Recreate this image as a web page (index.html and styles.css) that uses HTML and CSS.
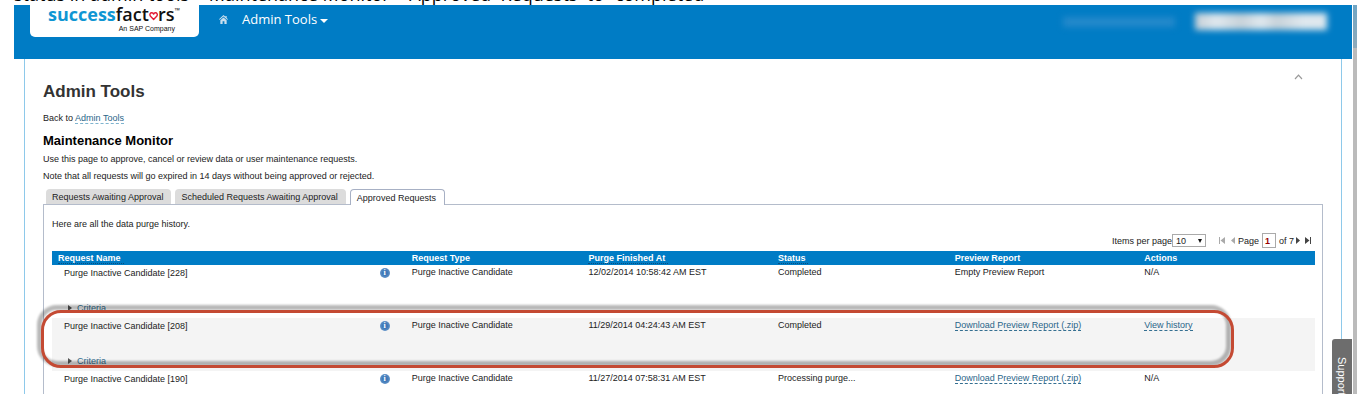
FILE: index.html
```html
<!DOCTYPE html>
<html lang="en">
<head>
<meta charset="utf-8">
<title>Admin Tools - Maintenance Monitor</title>
<link rel="stylesheet" href="styles.css">
</head>
<body>
<p class="caption"><span>status in admin tools &gt; Maintenance Monitor &gt; Approved&nbsp; Requests&nbsp; to “completed”</span></p>
<div class="window">
  <div class="page">
    <header class="topbar">
      <a class="logo" href="#">
        <span class="logo-name"><b>success</b>fact<svg class="heart" viewBox="0 0 12 12" aria-label="o"><path d="M6 10.600 2 6.400C.2 4 1.800 1.500 3.800 1.700 5 1.800 5.700 2.800 6 3.600 6.300 2.800 7 1.800 8.200 1.700c2-.2 3.600 2.300 1.800 4.700z" fill="#fff" stroke="#e31b35" stroke-width="1.800" stroke-linejoin="round"/></svg>rs<sup>™</sup></span>
        <span class="logo-sub">An SAP Company</span>
      </a>
      <nav class="menu">
        <a class="home" href="#" aria-label="Home"><svg viewBox="0 0 10 10"><path d="M5 0 0 4.600l.8.8L5 1.700l4.200 3.700.8-.8-1.500-1.400V1H7.200v1zM1.500 5.700V10H4V7h2v3h2.500V5.700L5 2.700z" fill="#c9dfee"/></svg></a>
        <button class="menu-button" type="button">Admin Tools<span class="caret"></span></button>
      </nav>
      <div class="user"><span class="user-name"></span><span class="user-search"></span></div>
    </header>
    <main class="content">
      <button class="collapse" type="button" aria-label="Collapse"><svg viewBox="0 0 8 6"><path d="M.5 5 4 1.200 7.500 5" fill="none" stroke="#999" stroke-width="1.200"/></svg></button>
      <h1>Admin Tools</h1>
      <p class="back">Back to <a href="#">Admin Tools</a></p>
      <h2>Maintenance Monitor</h2>
      <p class="note">Use this page to approve, cancel or review data or user maintenance requests.</p>
      <p class="note">Note that all requests will go expired in 14 days without being approved or rejected.</p>
      <div class="tabs" role="tablist">
        <button type="button" role="tab">Requests Awaiting Approval</button>
        <button type="button" role="tab">Scheduled Requests Awaiting Approval</button>
        <button type="button" role="tab" aria-selected="true" class="active">Approved Requests</button>
      </div>
      <section class="panel">
        <p class="intro">Here are all the data purge history.</p>
        <div class="pager">
          <label for="per-page">Items per page</label>
          <span class="select"><select id="per-page"><option>10</option></select></span>
          <button class="off first" type="button" aria-label="First page"><svg viewBox="0 0 6 7"><path d="M0 0h1v7H0zM6 0v7L1.500 3.500z"/></svg></button>
          <button class="off" type="button" aria-label="Previous page"><svg viewBox="0 0 6 7"><path d="M5 0v7L1 3.500z"/></svg></button>
          <label for="page-no">Page</label>
          <input id="page-no" type="text" value="1">
          <span>of 7</span>
          <button type="button" aria-label="Next page"><svg viewBox="0 0 6 7"><path d="M1 0v7l4-3.500z"/></svg></button>
          <button class="last" type="button" aria-label="Last page"><svg viewBox="0 0 6 7"><path d="M5 0h1v7H5zM0 0v7l4.500-3.500z"/></svg></button>
        </div>
        <div class="results">
          <table>
            <colgroup><col class="c-name"><col class="c-type"><col class="c-date"><col class="c-status"><col class="c-report"><col class="c-actions"></colgroup>
            <thead>
              <tr><th><span class="sortable">Request Name</span></th><th>Request Type</th><th><span class="sortable">Purge Finished At</span></th><th><span class="sortable">Status</span></th><th>Preview Report</th><th>Actions</th></tr>
            </thead>
            <tbody>
              <tr>
                <td><div class="name">Purge Inactive Candidate [228]<button class="info" type="button" aria-label="Details">i</button></div><button class="criteria" type="button">Criteria</button></td>
                <td>Purge Inactive Candidate</td><td>12/02/2014 10:58:42 AM EST</td><td>Completed</td><td>Empty Preview Report</td><td>N/A</td>
              </tr>
              <tr>
                <td><div class="name">Purge Inactive Candidate [208]<button class="info" type="button" aria-label="Details">i</button></div><button class="criteria" type="button">Criteria</button></td>
                <td>Purge Inactive Candidate</td><td>11/29/2014 04:24:43 AM EST</td><td>Completed</td><td><a href="#">Download Preview Report (.zip)</a></td><td><a href="#">View history</a></td>
              </tr>
              <tr>
                <td><div class="name">Purge Inactive Candidate [190]<button class="info" type="button" aria-label="Details">i</button></div><button class="criteria" type="button">Criteria</button></td>
                <td>Purge Inactive Candidate</td><td>11/27/2014 07:58:31 AM EST</td><td>Processing purge...</td><td><a href="#">Download Preview Report (.zip)</a></td><td>N/A</td>
              </tr>
            </tbody>
          </table>
          <div class="highlight"></div>
        </div>
      </section>
    </main>
    <button class="support" type="button">Support</button>
  </div>
  <div class="scrollbar"></div>
</div>
</body>
</html>
```
FILE: styles.css
```css
* { box-sizing: border-box; }

body {
  margin: 0;
  padding-bottom: 9px;
  height: 100vh;
  display: flex;
  flex-direction: column;
  overflow: hidden;
  background: #fff;
  color: #222;
  font: 9px/12px "Liberation Sans", Arial, sans-serif;
}

h1, h2, p { margin: 0; }
svg { display: block; }

button {
  border: 0;
  padding: 0;
  background: none;
  color: inherit;
  font: inherit;
}

a {
  color: #2a6589;
  text-decoration: none;
}

.caption {
  flex: none;
  height: 5px;
  padding-left: 14px;
  display: flex;
  align-items: flex-end;
  overflow: hidden;
  color: #000;
  font: 18px/22px "Open Sans", sans-serif;
  white-space: nowrap;
}

.window {
  flex: 1;
  min-height: 0;
  margin-left: 14px;
  display: flex;
  overflow: hidden;
}

.page {
  flex: 1;
  position: relative;
}

.scrollbar {
  width: 4px;
  margin-left: 1px;
  background: linear-gradient(#6fa5c4, #8fabbb 43px, #bbb 43px);
}

/* Top bar */
.topbar {
  height: 54px;
  padding: 0 25px 0 16px;
  display: flex;
  align-items: flex-start;
  background: #007cc5;
}

.logo {
  width: 169px;
  height: 32px;
  padding: 0 19px 0 18px;
  display: flex;
  flex-direction: column;
  border-radius: 0 0 5px 5px;
  background: #fff;
  color: #111;
  white-space: nowrap;
}

.logo-name {
  display: flex;
  font: 600 18px/19px "Open Sans", sans-serif;
}

.logo-name b { color: #0f96d3; font-weight: 700; }
.logo-name sup { font-size: 7px; line-height: 12px; }
.heart { width: 12px; height: 12px; margin-top: 5px; }

.logo-sub {
  align-self: flex-end;
  margin-right: 5px;
  font-size: 7px;
  line-height: 9px;
}

.menu {
  padding: 5px 0 0 20px;
  display: flex;
  align-items: center;
  gap: 14px;
}

.home svg { width: 9px; height: 9px; }

.menu-button {
  display: flex;
  align-items: center;
  gap: 3px;
  color: #fff;
  font: 13px/19px "Open Sans", sans-serif;
}

.caret {
  border: 4px solid transparent;
  border-bottom: 0;
  border-top-color: #fff;
  margin-top: 2px;
}

.user {
  margin-left: auto;
  padding-top: 8px;
  display: flex;
  align-items: center;
  gap: 20px;
}

.user-name {
  width: 112px;
  height: 10px;
  background: #2489cb;
  filter: blur(3px);
}

.user-search {
  width: 132px;
  height: 17px;
  background: linear-gradient(90deg, #c4cfd6, #dfe8ee 16%, #c7d2d9 35%, #dfe8ee 50%, #c7d2d9 62%, #dfe8ee 82%);
  filter: blur(3px);
}

/* Page content */
.content {
  position: relative;
  min-height: 100%;
  margin: 0 10px;
  padding: 23px 18px 0;
  border: solid #8ec9ea;
  border-width: 0 1px;
}

.collapse {
  position: absolute;
  top: 15px;
  right: 38px;
}

.collapse svg { width: 9px; height: 6px; }

h1 { color: #333; font-size: 17px; line-height: 20px; }
.back { margin-top: 10px; }
.back a { border-bottom: 1px dashed #7fb4cf; }
h2 { margin: 10px 0 5px; color: #000; font-size: 13px; line-height: 14px; }
.note { margin-bottom: 5px; }

.tabs {
  margin-top: 7px;
  padding-left: 3px;
  display: flex;
  gap: 4px;
}

.tabs button {
  height: 15px;
  padding: 0 8px 0 6px;
  border-radius: 4px 4px 0 0;
  background: #dcdcdc;
}

.tabs .active {
  position: relative;
  height: 16px;
  margin-bottom: -1px;
  border: 1px solid #a7b0c4;
  border-bottom: 0;
  background: #fff;
}

.panel {
  padding: 13px 7px 0 8px;
  border: 1px solid #b4bccb;
  border-bottom: 0;
}

/* Pager */
.pager {
  margin: 3px 4px 3px 0;
  display: flex;
  justify-content: flex-end;
  align-items: center;
  color: #222;
}

.select {
  position: relative;
  margin-right: 12px;
}

.select::after {
  content: "";
  position: absolute;
  top: 5px;
  right: 4px;
  border: 2px solid transparent;
  border-top: 4px solid #111;
  border-bottom: 0;
}

.pager select {
  display: block;
  width: 34px;
  height: 13px;
  padding: 0 3px;
  appearance: none;
  border: 1px solid #aaa;
  border-radius: 0;
  background: #fff;
  color: #222;
  font: inherit;
}

.pager input {
  width: 14px;
  height: 15px;
  margin: 0 3px;
  padding: 0 2px;
  border: 1px solid #aaa;
  color: #900;
  font: inherit;
  font-weight: bold;
}

.pager svg { width: 6px; height: 7px; fill: #444; }
.pager .off svg { fill: #aaa; }
.pager .first { margin-right: 5px; }
.pager .off + label { margin-left: 2px; }
.pager span + button { margin-left: 1px; }
.pager .last { margin-left: 4px; }

/* Results */
.results { position: relative; }

table {
  width: 100%;
  table-layout: fixed;
  border-collapse: collapse;
}

.c-name { width: 28%; }
.c-type { width: 14%; }
.c-date { width: 15%; }
.c-status { width: 14%; }
.c-report { width: 15%; }
.c-actions { width: 14%; }

th {
  height: 14px;
  padding: 0 6px;
  background: #007cc5;
  color: #fff;
  text-align: left;
}

.sortable {
  padding-right: 3px;
  border-bottom: 1px dotted #084f7e;
}

td {
  height: 53px;
  padding: 1px 6px 0;
  vertical-align: top;
}

tbody tr:nth-child(even) { background: #f4f4f4; }
td a { border-bottom: 1px dashed #346f91; }

.name {
  padding: 1px 10px 0 6px;
  display: flex;
  justify-content: space-between;
  align-items: center;
}

.info {
  width: 10px;
  height: 10px;
  border-radius: 50%;
  background: radial-gradient(#3f79b8 35%, #7fa9d6);
  color: #fff;
  font: bold 8px/10px "Liberation Serif", serif;
}

.criteria {
  margin: 23px 0 0 10px;
  display: flex;
  align-items: center;
  gap: 5px;
  color: #346f91;
}

.criteria::before {
  content: "";
  border: 3px solid transparent;
  border-left: 4px solid #555;
  border-right: 0;
}

.highlight {
  position: absolute;
  top: 59px;
  left: -11px;
  right: 81px;
  height: 58px;
  pointer-events: none;
}

.highlight::before,
.highlight::after {
  content: "";
  position: absolute;
  border-radius: 20px;
}

.highlight::before {
  inset: -5px 3px 2px -4px;
  border: 5px solid rgba(0, 0, 0, 0.28);
  filter: blur(1px);
}

.highlight::after {
  inset: 0;
  border: 3px solid #c44a33;
}

.support {
  position: absolute;
  top: 334px;
  right: 0;
  width: 20px;
  height: 90px;
  padding-top: 18px;
  border-radius: 3px 0 0 0;
  background: #6d6d6d;
  color: #fff;
  font-size: 11px;
  line-height: 20px;
  text-align: left;
  writing-mode: vertical-rl;
}
```
